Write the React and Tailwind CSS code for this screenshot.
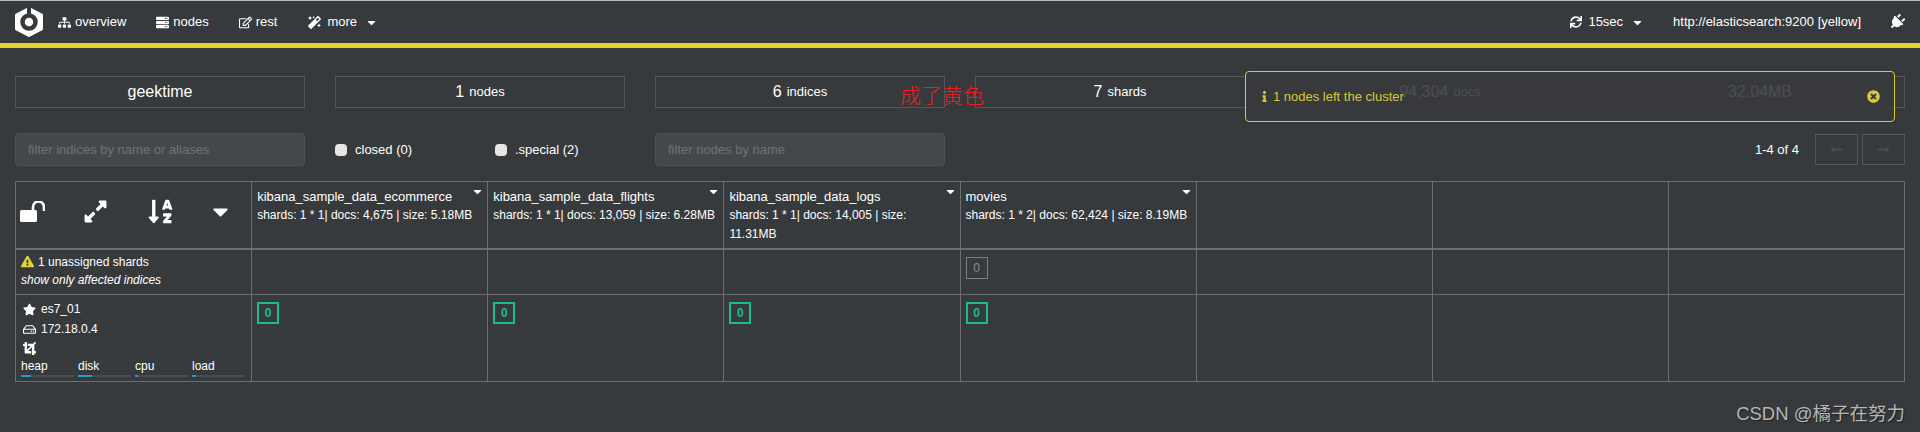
import {
  FaSitemap,
  FaServer,
  FaRegEdit,
  FaMagic,
  FaCaretDown,
  FaSync,
  FaPlug,
  FaInfo,
  FaTimesCircle,
  FaExpandAlt,
  FaSortAlphaDown,
  FaExclamationTriangle,
  FaStar,
  FaRegHdd,
  FaCrop,
  FaLongArrowAltLeft,
  FaLongArrowAltRight,
} from "react-icons/fa";

const indices = [
  { name: "kibana_sample_data_ecommerce", info: "shards: 1 * 1| docs: 4,675 | size: 5.18MB" },
  { name: "kibana_sample_data_flights", info: "shards: 1 * 1| docs: 13,059 | size: 6.28MB" },
  { name: "kibana_sample_data_logs", info: "shards: 1 * 1| docs: 14,005 | size: 11.31MB" },
  { name: "movies", info: "shards: 1 * 2| docs: 62,424 | size: 8.19MB" },
];

const stats = [
  { value: "geektime" },
  { value: "1", label: "nodes" },
  { value: "6", label: "indices" },
  { value: "7", label: "shards" },
  { value: "94,304", label: "docs" },
  { value: "32.04MB" },
];

const metrics = [
  { name: "heap", used: "w-[19%]" },
  { name: "disk", used: "w-[26%]" },
  { name: "cpu", used: "w-[6%]" },
  { name: "load", used: "w-[8%]" },
];

function Logo() {
  return (
    <svg viewBox="0 0 28 30" className="w-7 h-[30px]">
      <path d="M14 1.5 L26.5 8 V22 L14 28.5 L1.5 22 V8 Z" fill="#fff" stroke="#fff" strokeWidth="3" strokeLinejoin="round" />
      <circle cx="14" cy="15" r="6.5" fill="none" stroke="#373a3d" strokeWidth="4.5" />
      <rect x="12" y="0" width="4" height="7" fill="#373a3d" />
    </svg>
  );
}

function UnlockIcon() {
  return (
    <svg viewBox="0 0 25 21" className="w-[25px] h-[21px]" fill="#fff">
      <rect x="0" y="9" width="17" height="12" rx="1.5" />
      <path d="M13 9 V6 A5.5 5.5 0 0 1 24 6 V10" fill="none" stroke="#fff" strokeWidth="2.6" />
    </svg>
  );
}

function NavItem({ icon, label, caret, className }) {
  return (
    <div className={`flex items-center text-[13px] text-white ${className}`}>
      {icon}
      <span>{label}</span>
      {caret && <FaCaretDown className="ml-2 text-[13px]" />}
    </div>
  );
}

function Shard({ unassigned }) {
  return (
    <div
      className={
        unassigned
          ? "w-[22px] h-[22px] border border-[#7d7f81] text-[#8a8c8e] text-xs flex items-center justify-center"
          : "w-[22px] h-[22px] border-2 border-[#1abc8c] text-[#1abc8c] text-xs font-bold flex items-center justify-center"
      }
    >
      0
    </div>
  );
}

export default function App() {
  const cell = "border border-[#6c6e70] align-top p-0";
  const empty = [0, 1, 2];

  return (
    <div className="relative h-[432px] overflow-hidden bg-[#373a3d] text-white font-['Liberation_Sans','Noto_Sans_CJK_SC',sans-serif]">
      <div className="h-px bg-[#b9b9b9]" />
      <nav className="h-[42px] flex items-center pl-[15px] pr-[15px]">
        <Logo />
        <NavItem className="ml-[15px]" icon={<FaSitemap className="mr-1 text-[13px]" />} label="overview" />
        <NavItem className="ml-[30px]" icon={<FaServer className="mr-1 text-[13px]" />} label="nodes" />
        <NavItem className="ml-[30px]" icon={<FaRegEdit className="mr-1 text-[13px]" />} label="rest" />
        <NavItem className="ml-[31px]" icon={<FaMagic className="mr-[6px] text-[13px]" />} label="more" caret />
        <div className="ml-auto flex items-center">
          <NavItem icon={<FaSync className="mr-[6px] text-[12px]" />} label="15sec" caret />
          <span className="ml-[29px] text-[13px]">http://elasticsearch:9200 [yellow]</span>
          <FaPlug className="ml-[28px] text-[16px] rotate-45" />
        </div>
      </nav>
      <div className="h-[5px] bg-[#e3d432]" />

      <div className="mt-7 flex gap-[30px] px-[15px]">
        {stats.map((s) => (
          <div
            key={s.value}
            className="w-[290px] h-8 border border-[#54575a] flex items-center justify-center text-base"
          >
            {s.value}
            {s.label && <span className="ml-[5px] text-[13px]">{s.label}</span>}
          </div>
        ))}
      </div>

      <div className="mt-[25px] flex items-center gap-[30px] px-[15px]">
        <div className="w-[290px] h-[33px] rounded bg-[#45484b] border border-[#4f5255] flex items-center pl-3 text-[13px] text-[#6f7275]">
          filter indices by name or aliases
        </div>
        <div className="w-[290px] flex items-center text-[13px]">
          <div className="w-[160px] flex items-center">
            <span className="w-3 h-3 rounded-sm bg-[#e6e6e6] mr-2" />
            closed (0)
          </div>
          <div className="flex items-center">
            <span className="w-3 h-3 rounded-sm bg-[#e6e6e6] mr-2" />
            .special (2)
          </div>
        </div>
        <div className="w-[290px] h-[33px] rounded bg-[#45484b] border border-[#4f5255] flex items-center pl-3 text-[13px] text-[#6f7275]">
          filter nodes by name
        </div>
        <div className="ml-auto flex items-center text-[13px]">
          <span className="mr-4">1-4 of 4</span>
          <div className="w-[43px] h-[31px] border border-[#54575a] flex items-center justify-center text-[#4b4e51]">
            <FaLongArrowAltLeft />
          </div>
          <div className="ml-[4px] w-[43px] h-[31px] border border-[#54575a] flex items-center justify-center text-[#4b4e51]">
            <FaLongArrowAltRight />
          </div>
        </div>
      </div>

      <div className="mt-[15px] px-[15px]">
        <table className="w-full table-fixed border-collapse text-xs">
          <tbody>
            <tr className="h-[67px] border-b-2 border-[#6c6e70]">
              <td className="border border-[#6c6e70] align-middle p-0">
                <div className="flex items-center pl-[4px] pb-[6px] text-[25px]">
                  <UnlockIcon />
                  <FaExpandAlt className="ml-[38px]" />
                  <FaSortAlphaDown className="ml-[39px] text-[27px]" />
                  <FaCaretDown className="ml-[34px]" />
                </div>
              </td>
              {indices.map((idx) => (
                <td key={idx.name} className={cell}>
                  <div className="relative px-[5px] pt-[5px] leading-[19px]">
                    <div className="text-[13px]">{idx.name}</div>
                    <div>{idx.info}</div>
                    <FaCaretDown className="absolute top-[3px] right-[3px] text-[13px]" />
                  </div>
                </td>
              ))}
              {empty.map((i) => (
                <td key={i} className={cell} />
              ))}
            </tr>
            <tr className="h-[46px]">
              <td className={cell}>
                <div className="pl-[5px] pt-[3px] leading-[18px]">
                  <div className="flex items-center">
                    <FaExclamationTriangle className="text-[#e3d432] text-[13px] mr-1" />
                    1 unassigned shards
                  </div>
                  <div className="italic">show only affected indices</div>
                </div>
              </td>
              {indices.map((idx) => (
                <td key={idx.name} className={cell}>
                  {idx.name === "movies" && (
                    <div className="pl-[5px] pt-[7px]">
                      <Shard unassigned />
                    </div>
                  )}
                </td>
              ))}
              {empty.map((i) => (
                <td key={i} className={cell} />
              ))}
            </tr>
            <tr className="h-[87px]">
              <td className={cell}>
                <div className="px-[5px] pt-[4px]">
                  <div className="pl-[2px] flex items-center h-5">
                    <FaStar className="text-[13px] mr-[5px]" />
                    es7_01
                  </div>
                  <div className="pl-[2px] flex items-center h-5">
                    <FaRegHdd className="text-[13px] mr-[5px]" />
                    172.18.0.4
                  </div>
                  <div className="pl-[2px] flex items-center h-[18px]">
                    <FaCrop className="text-[13px]" />
                  </div>
                  <div className="mt-[2px] flex gap-[4px]">
                    {metrics.map((m) => (
                      <div key={m.name} className="w-[53px] leading-[14px]">
                        {m.name}
                        <div className="mt-[2px] h-[2px] bg-[#4a4d50]">
                          <div className={`h-full bg-[#1b9fd6] ${m.used}`} />
                        </div>
                      </div>
                    ))}
                  </div>
                </div>
              </td>
              {indices.map((idx) => (
                <td key={idx.name} className={cell}>
                  <div className="pl-[5px] pt-[7px]">
                    <Shard />
                  </div>
                </td>
              ))}
              {empty.map((i) => (
                <td key={i} className={cell} />
              ))}
            </tr>
          </tbody>
        </table>
      </div>

      {/* toast over the stat boxes */}
      <div className="absolute left-[1245px] top-[71px] w-[650px] h-[51px] rounded border border-[#d8ca34] bg-[#373a3d]/90 flex items-center pl-[13px] pr-[14px] text-[13px] text-[#d8ca34]">
        <FaInfo className="text-[11px] mr-[3px]" />
        <span>1 nodes left the cluster</span>
        <FaTimesCircle className="ml-auto text-[13px]" />
      </div>

      {/* annotation and watermark added on the screenshot */}
      <div className="absolute left-[900px] top-[80px] text-[21px] font-light text-[#f01c1c]">成了黄色</div>
      <div className="absolute right-[15px] top-[400px] text-[18.5px] text-[#b4b6b8] [text-shadow:1px_1px_1px_#222]">CSDN @橘子在努力</div>
    </div>
  );
}
